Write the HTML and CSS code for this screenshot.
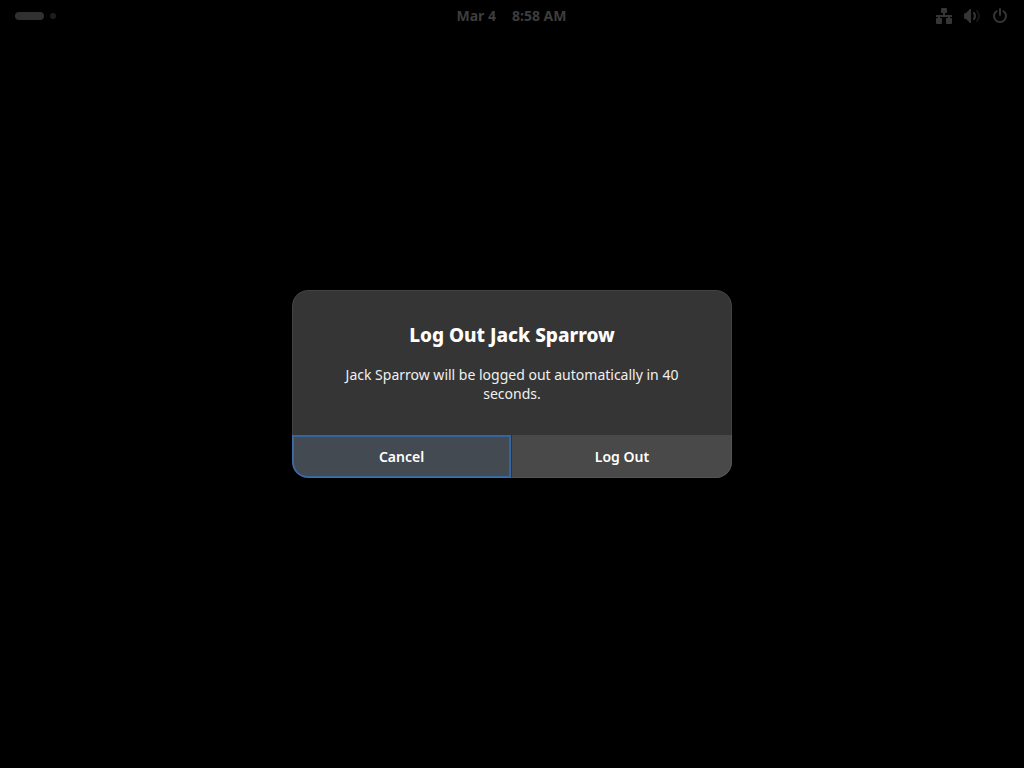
FILE: index.html
```html
<!DOCTYPE html>
<html lang="en">
<head>
<meta charset="utf-8">
<meta name="viewport" content="width=device-width, initial-scale=1">
<title>Log Out Jack Sparrow</title>
<link rel="stylesheet" href="styles.css">
</head>
<body class="desktop">
<header class="panel">
  <button class="workspaces" type="button" aria-label="Activities"><span class="pill"></span><span class="dot"></span></button>
  <button class="clock" type="button"><span>Mar 4</span><span>8:58 AM</span></button>
  <button class="status" type="button" aria-label="System">
    <svg class="icon" viewBox="0 0 16 16" aria-hidden="true"><path d="M5 1a1 1 0 0 1 1-1h4a1 1 0 0 1 1 1v3a1 1 0 0 1-1 1H9v2h7v2h-2v1h1a1 1 0 0 1 1 1v4a1 1 0 0 1-1 1h-4a1 1 0 0 1-1-1v-4a1 1 0 0 1 1-1h1V9H4v1h1a1 1 0 0 1 1 1v4a1 1 0 0 1-1 1H1a1 1 0 0 1-1-1v-4a1 1 0 0 1 1-1h1V9H0V7h7V5H6a1 1 0 0 1-1-1Z"/></svg>
    <svg class="icon" viewBox="0 0 16 16" aria-hidden="true"><path d="M6 1 2 5H1.500a1.500 1.500 0 0 0-1.500 1.500v3A1.500 1.500 0 0 0 1.500 11H2l4 4h1V1Z"/><path class="wave" d="M10 5Q12 8 10 11"/><path class="wave wave-dim" d="M13 3Q17 8 13 13"/></svg>
    <svg class="icon" viewBox="0 0 16 16" aria-hidden="true"><path class="stroke" d="M4.500 3.200a6 6 0 1 0 7 0M8 1v6"/></svg>
  </button>
</header>
<main class="stage">
  <section class="dialog" role="alertdialog" aria-labelledby="title" aria-describedby="message">
    <div class="content">
      <h1 class="title" id="title">Log Out Jack Sparrow</h1>
      <p class="message" id="message">Jack Sparrow will be logged out automatically in 40 seconds.</p>
    </div>
    <div class="actions">
      <button class="action action-focused" type="button">Cancel</button>
      <button class="action" type="button">Log Out</button>
    </div>
  </section>
</main>
</body>
</html>
```
FILE: styles.css
```css
* { box-sizing: border-box; }

.desktop {
  margin: 0;
  min-height: 100vh;
  display: grid;
  grid-template-rows: 32px 1fr 32px;
  background: #000;
  font-family: "Noto Sans", "Open Sans", sans-serif;
}

button {
  margin: 0;
  padding: 0;
  border: 0;
  background: none;
  font: inherit;
  color: inherit;
}

.panel {
  display: grid;
  grid-template-columns: 1fr auto 1fr;
  align-items: center;
  padding: 0 16px 0 15px;
  color: #3d3d3d;
}

.workspaces {
  display: flex;
  align-items: center;
  gap: 6px;
  justify-self: start;
}

.pill {
  width: 29px;
  height: 8px;
  border-radius: 4px;
  background: #303030;
}

.dot {
  width: 6px;
  height: 6px;
  border-radius: 50%;
  background: #1d1d1d;
}

.clock {
  display: flex;
  gap: 16px;
  font-size: 14px;
  line-height: 20px;
  font-weight: 700;
}

.status {
  display: flex;
  gap: 12px;
  justify-self: end;
}

.icon {
  width: 16px;
  height: 16px;
  fill: #353535;
}

.wave, .stroke {
  fill: none;
  stroke: #353535;
  stroke-width: 2;
  stroke-linecap: round;
}

.wave-dim { stroke: #151515; }

.stage {
  display: grid;
  place-items: center;
}

.dialog {
  position: relative;
  width: 440px;
  max-width: 100%;
  border-radius: 16px;
  overflow: hidden;
  background: #353535;
  color: #fff;
  text-align: center;
}

.dialog::after {
  content: "";
  position: absolute;
  inset: 0;
  border: 1px solid rgba(255, 255, 255, 0.07);
  border-radius: inherit;
  pointer-events: none;
}

.content { padding: 32px 48px; }

.title {
  margin: 0 0 16px;
  font-size: 19px;
  line-height: 27px;
  font-weight: 800;
}

.message {
  margin: 0;
  font-size: 14px;
  line-height: 19px;
  color: #f0f0f0;
}

.actions {
  display: grid;
  grid-template-columns: 1fr 1fr;
}

.action {
  height: 43px;
  background: #494949;
  color: #fff;
  font-size: 14px;
  line-height: 19px;
  font-weight: 600;
}

.action-focused {
  margin-right: 1px;
  border: 2px solid #3565a0;
  border-bottom-left-radius: 16px;
  background: #444a52;
}
```
